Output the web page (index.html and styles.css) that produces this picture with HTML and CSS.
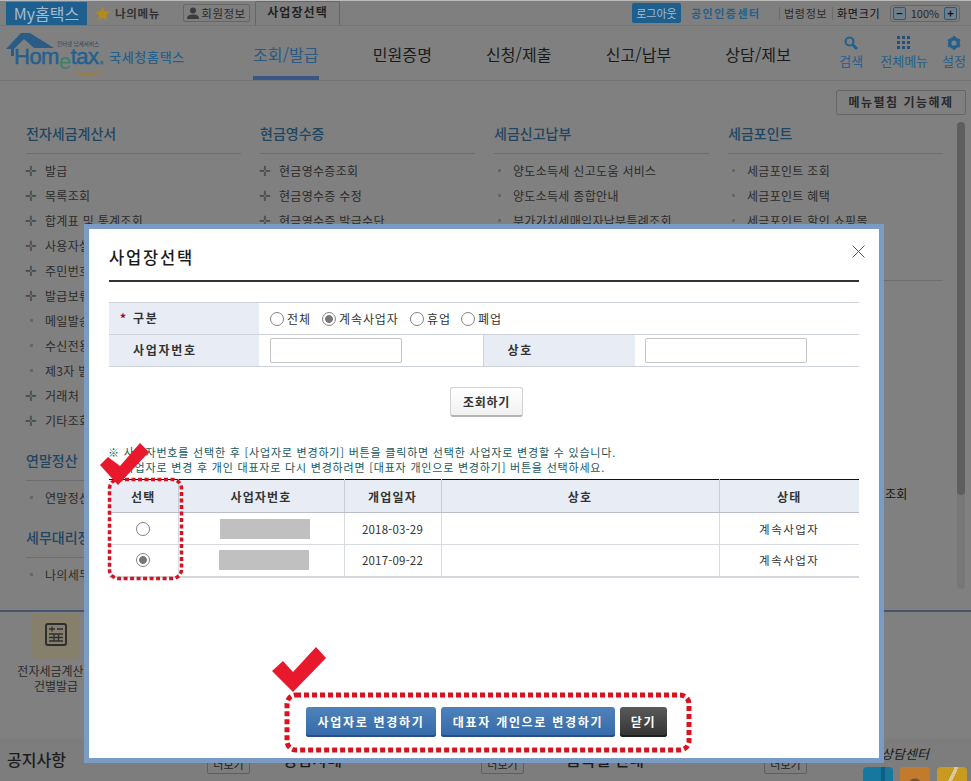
FILE: index.html
```html
<!DOCTYPE html>
<html lang="ko">
<head>
  <meta charset="UTF-8">
  <title>사업장선택</title>
  <link rel="stylesheet" href="styles.css">
</head>
<body>

  <!-- top bar -->
  <div class="topbar">
    <a class="my-home">My홈택스</a>
    <a class="my-menu">
      <svg width="15" height="15" viewBox="0 0 24 24"><path d="M12 1l3.400 7.300 7.900 1-5.800 5.400 1.500 7.900L12 18.700l-7 3.900 1.500-7.900L.7 9.300l7.900-1z" fill="#b58a1c"/></svg>
      나의메뉴
    </a>
    <a class="member">
      <svg width="12" height="12" viewBox="0 0 12 12"><circle cx="6" cy="3.500" r="3" fill="#3c3c3c"/><path d="M0 12c0-3.500 2.500-4.500 6-4.500s6 1 6 4.500z" fill="#3c3c3c"/></svg>
      회원정보
    </a>
    <a class="biz-tab">사업장선택</a>
    <div class="top-right">
      <a class="logout">로그아웃</a>
      <a class="cert">공인인증센터</a>
      <a class="law">법령정보</a>
      <span class="size-label">화면크기</span>
      <div class="zoomer"><b>−</b><span>100%</span><b>+</b></div>
    </div>
  </div>

  <!-- logo and nav -->
  <div class="header">
    <div class="logo">
      <svg class="roof" width="50" height="24" viewBox="0 0 50 24"><path d="M0 16L15 0h9l24 15H28L18 6 8 16v7H5v-7z" fill="#2a5c85"/></svg>
      <span class="logo-small">인터넷 납세서비스</span>
      <span class="logo-word">Hom<i>e</i>tax<em>.</em></span>
      <svg class="swoosh" width="32" height="6" viewBox="0 0 32 6"><path d="M0 0c8 7 22 7 32 0-10 4-22 4-32 0z" fill="#a27a3a"/></svg>
      <span class="logo-name">국세청홈택스</span>
    </div>
    <ul class="nav">
      <li class="on">조회/발급</li>
      <li>민원증명</li>
      <li>신청/제출</li>
      <li>신고/납부</li>
      <li>상담/제보</li>
    </ul>
    <div class="tools">
      <a class="tool tool-search">
        <svg width="14" height="14" viewBox="0 0 14 14"><circle cx="5.500" cy="5.500" r="4" fill="none" stroke="#24608e" stroke-width="2.200"/><path d="M8.500 8.500L13 13" stroke="#24608e" stroke-width="2.800"/></svg>
        검색
      </a>
      <a class="tool tool-all">
        <svg width="14" height="14" viewBox="0 0 14 14" fill="#24507a"><rect width="3" height="3"/><rect x="5" width="3" height="3"/><rect x="10" width="3" height="3"/><rect y="5" width="3" height="3"/><rect x="5" y="5" width="3" height="3"/><rect x="10" y="5" width="3" height="3"/><rect y="10" width="3" height="3"/><rect x="5" y="10" width="3" height="3"/><rect x="10" y="10" width="3" height="3"/></svg>
        전체메뉴
      </a>
      <a class="tool tool-set">
        <svg width="14" height="14" viewBox="0 0 14 14"><circle cx="7" cy="7" r="4.300" fill="none" stroke="#24608e" stroke-width="3.400"/><path d="M7 0v2M7 12v2M1 3.500l1.700 1M11.300 9.500l1.700 1M1 10.500l1.700-1M11.300 4.500l1.700-1" stroke="#24608e" stroke-width="2.200"/></svg>
        설정
      </a>
    </div>
  </div>

  <!-- menu -->
  <div class="main">
    <div class="main-tools"><a class="unfold-btn">메뉴펼침 기능해제</a></div>
    <div class="columns">
      <div class="col">
        <div class="sec">
          <h3>전자세금계산서</h3>
          <ul>
            <li class="plus">발급</li>
            <li class="plus">목록조회</li>
            <li class="plus">합계표 및 통계조회</li>
            <li class="plus">사용자설정</li>
            <li class="plus">주민번호수취분전환</li>
            <li class="plus">발급보류</li>
            <li>메일발송</li>
            <li>수신전용</li>
            <li>제3자 발급</li>
            <li class="plus">거래처</li>
            <li class="plus">기타조회</li>
          </ul>
        </div>
        <div class="sec">
          <h3>연말정산</h3>
          <ul><li>연말정산간소화</li></ul>
        </div>
        <div class="sec">
          <h3>세무대리정보</h3>
          <ul><li>나의세무대리</li></ul>
        </div>
      </div>
      <div class="col">
        <div class="sec">
          <h3>현금영수증</h3>
          <ul>
            <li class="plus">현금영수증조회</li>
            <li class="plus">현금영수증 수정</li>
            <li class="plus">현금영수증 발급수단</li>
          </ul>
        </div>
      </div>
      <div class="col">
        <div class="sec">
          <h3>세금신고납부</h3>
          <ul>
            <li>양도소득세 신고도움 서비스</li>
            <li>양도소득세 종합안내</li>
            <li>부가가치세매입자납부특례조회</li>
          </ul>
        </div>
      </div>
      <div class="col">
        <div class="sec">
          <h3>세금포인트</h3>
          <ul>
            <li>세금포인트 조회</li>
            <li>세금포인트 혜택</li>
            <li>세금포인트 할인 쇼핑몰</li>
          </ul>
        </div>
        <div class="sec">
          <h3>&nbsp;</h3>
          <ul><li class="far">조회</li></ul>
        </div>
      </div>
    </div>
    <div class="scroll"><div class="thumb"></div></div>
  </div>

  <!-- quick links -->
  <div class="quick">
    <div class="quick-item">
      <div class="quick-tile">
        <svg width="22" height="23" viewBox="0 0 22 23"><rect x="1" y="1" width="20" height="21" rx="2" fill="none" stroke="#2f2f2f" stroke-width="2"/><path d="M4 6h6M7 3.500v5M12 6h6M4 11h14M4 14.500h14M4 18h14M9 11v7M13.500 11v7" stroke="#2f2f2f" stroke-width="1.300" fill="none"/></svg>
      </div>
      <p>전자세금계산서<br>건별발급</p>
    </div>
  </div>

  <!-- bottom notices -->
  <div class="bottom">
    <div class="notice notice-a"><strong>공지사항</strong><a>더보기</a></div>
    <div class="notice notice-b"><strong>상담사례</strong><a>더보기</a></div>
    <div class="notice notice-c"><strong>품목별 안내</strong><a>더보기</a></div>
    <div class="counsel">
      <span>상담센터</span>
      <div class="tiles"><i class="t-blue"></i><i class="t-orange"></i><i class="t-yellow"></i></div>
    </div>
  </div>

  <!-- popup -->
  <div class="modal">
    <h2>사업장선택</h2>
    <svg class="close" width="13" height="13" viewBox="0 0 13 13"><path d="M.5.5l12 12M12.500.5l-12 12" stroke="#555" stroke-width="1" fill="none"/></svg>

    <table class="search-table">
      <colgroup>
        <col class="w-label">
        <col class="w-field">
        <col class="w-label2">
        <col>
      </colgroup>
      <tr>
        <th class="th-req"><span class="req">*</span>구분</th>
        <td colspan="3">
          <div class="radios">
            <label class="r1"><input type="radio" name="kind">전체</label>
            <label class="r2"><input type="radio" name="kind" checked>계속사업자</label>
            <label class="r3"><input type="radio" name="kind">휴업</label>
            <label class="r4"><input type="radio" name="kind">폐업</label>
          </div>
        </td>
      </tr>
      <tr>
        <th>사업자번호</th>
        <td class="td-field"><input class="field" type="text"></td>
        <th class="th-name">상호</th>
        <td class="td-field"><input class="field field-wide" type="text"></td>
      </tr>
    </table>

    <div class="search-row"><button class="btn-search">조회하기</button></div>

    <p class="note">※ 사업자번호를 선택한 후 [사업자로 변경하기] 버튼을 클릭하면 선택한 사업자로 변경할 수 있습니다.<br>※ 사업자로 변경 후 개인 대표자로 다시 변경하려면 [대표자 개인으로 변경하기] 버튼을 선택하세요.</p>

    <table class="list-table">
      <tr>
        <th class="c1">선택</th>
        <th class="c2">사업자번호</th>
        <th class="c3">개업일자</th>
        <th class="c4">상호</th>
        <th>상태</th>
      </tr>
      <tr>
        <td><input type="radio" name="biz"></td>
        <td><div class="mask"></div></td>
        <td>2018-03-29</td>
        <td></td>
        <td class="state">계속사업자</td>
      </tr>
      <tr>
        <td><input type="radio" name="biz" checked></td>
        <td><div class="mask mask-b"></div></td>
        <td>2017-09-22</td>
        <td></td>
        <td class="state">계속사업자</td>
      </tr>
    </table>

    <div class="actions">
      <button class="btn-blue">사업자로 변경하기</button>
      <button class="btn-blue btn-long">대표자 개인으로 변경하기</button>
      <button class="btn-dark">닫기</button>
    </div>
  </div>

  <!-- red marks drawn over the capture -->
  <svg class="marks" width="971" height="781" viewBox="0 0 971 781">
    <rect x="109.500" y="479.500" width="72" height="99" rx="9" class="ring ring-small"/>
    <rect x="287" y="695" width="402" height="55" rx="9" class="ring"/>
    <path d="M100 465l8-8 12 9 20-23 9 9-31 33z" fill="#e8192c"/>
    <path d="M272 671l11-10 10 11 23-25 10 11-33 34z" fill="#e8192c"/>
  </svg>

</body>
</html>
```

FILE: styles.css
```css
* { box-sizing: border-box; }
html, body { margin: 0; height: 781px; overflow: hidden; }
body {
  font-family: "Noto Sans CJK KR", "Liberation Sans", sans-serif;
  font-size: 12px;
  color: #222;
  background: #808080;
  position: relative;
}
ul { list-style: none; margin: 0; padding: 0; }
a { color: inherit; text-decoration: none; }
h2, h3, p { margin: 0; }

/* top bar */
.topbar {
  height: 26px;
  display: flex;
  align-items: center;
  background: #7f7f7f;
  border-top: 1px solid #bbb;
  border-bottom: 1px solid #747474;
  padding-left: 6px;
}
.my-home {
  width: 81px;
  height: 23px;
  background: #1f5f8e;
  color: #a4bccd;
  font-size: 16px;
  line-height: 23px;
  text-align: center;
}
.my-menu {
  display: flex;
  align-items: center;
  gap: 5px;
  margin-left: 8px;
  width: 88px;
  font-weight: 700;
  font-size: 11.500px;
  letter-spacing: .7px;
  color: #333;
}
.member {
  display: flex;
  align-items: center;
  justify-content: center;
  gap: 2px;
  width: 67px;
  height: 18px;
  border: 1px solid #666;
  border-radius: 2px;
  font-size: 11.500px;
  letter-spacing: .5px;
  color: #2a2a2a;
}
.biz-tab {
  width: 85px;
  height: 24px;
  margin-left: 5px;
  border: 1px solid #666;
  border-bottom: 0;
  border-radius: 2px 2px 0 0;
  font-weight: 700;
  font-size: 12px;
  letter-spacing: 1.100px;
  line-height: 20px;
  text-align: center;
  color: #222;
}
.top-right {
  margin-left: auto;
  display: flex;
  align-items: center;
  padding-right: 11px;
}
.logout {
  width: 49px;
  height: 20px;
  background: #1f5f8e;
  border-radius: 2px;
  color: #a4bccd;
  font-size: 11px;
  line-height: 20px;
  text-align: center;
}
.cert {
  margin-left: 10px;
  width: 87px;
  font-weight: 700;
  font-size: 11px;
  letter-spacing: 1.500px;
  color: #255f8d;
}
.law {
  width: 53px;
  padding-left: 4px;
  margin-left: 1px;
  border-left: 1px solid #6c6c6c;
  font-size: 11px;
  line-height: 13px;
  letter-spacing: .7px;
  color: #2a2a2a;
}
.size-label {
  width: 58px;
  padding-left: 4px;
  border-left: 1px solid #6c6c6c;
  font-size: 11px;
  line-height: 13px;
  letter-spacing: .7px;
  color: #111;
}
.zoomer {
  width: 70px;
  height: 17px;
  border: 1px solid #666;
  border-radius: 3px;
  display: flex;
  align-items: center;
  justify-content: space-between;
  padding: 0 2px;
  font-size: 11px;
  color: #2a2a2a;
}
.zoomer b {
  width: 13px;
  height: 13px;
  border: 1px solid #33566f;
  background: #6d7f8c;
  border-radius: 2px;
  font-size: 11px;
  line-height: 10px;
  text-align: center;
  color: #111;
}

/* header */
.header {
  height: 55px;
  display: flex;
  border-bottom: 1px solid #747474;
  position: relative;
}
.logo { width: 253px; position: relative; }
.roof { position: absolute; left: 6px; top: 7px; }
.logo-small {
  position: absolute;
  left: 57px;
  top: 15px;
  font-size: 5.500px;
  line-height: 7px;
  color: #2c4256;
  white-space: nowrap;
}
.logo-word {
  position: absolute;
  left: 14px;
  top: 23px;
  font-family: "Liberation Sans", sans-serif;
  font-size: 22px;
  line-height: 16px;
  letter-spacing: -.5px;
  color: #24608e;
  -webkit-text-stroke: .5px #24608e;
  white-space: nowrap;
}
.logo-word i { font-style: normal; position: relative; top: 5px; color: #3f7f6a; -webkit-text-stroke: 0; }
.logo-word em { font-style: normal; color: #3f7f6a; }
.swoosh { position: absolute; left: 72px; top: 44px; }
.logo-name {
  position: absolute;
  left: 109px;
  top: 22px;
  font-size: 13px;
  font-weight: 500;
  letter-spacing: .7px;
  line-height: 18px;
  color: #24608e;
  white-space: nowrap;
}
.nav { display: flex; gap: 54px; }
.nav li {
  height: 54px;
  padding-top: 16px;
  font-size: 16px;
  letter-spacing: .1px;
  line-height: 24px;
  color: #1a1a1a;
  white-space: nowrap;
}
.nav li.on { color: #2a5a80; border-bottom: 4px solid #3a5784; }
.tools { margin-left: auto; display: flex; padding-right: 5px; }
.tool {
  display: flex;
  flex-direction: column;
  align-items: center;
  padding-top: 10px;
  font-size: 13px;
  line-height: 18px;
  color: #255f8d;
  white-space: nowrap;
}
.tool svg { margin-bottom: 2px; }
.tool-all { margin-left: 17px; }
.tool-set { margin-left: 14px; }

/* menu area */
.main { height: 529px; position: relative; }
.main-tools {
  display: flex;
  justify-content: flex-end;
  padding: 9px 5px 0 0;
}
.unfold-btn {
  width: 130px;
  height: 25px;
  border: 1px solid #666;
  border-radius: 2px;
  font-weight: 700;
  font-size: 12px;
  letter-spacing: 1.500px;
  line-height: 22px;
  text-align: center;
  color: #2a2a2a;
}
.columns {
  display: flex;
  gap: 19px;
  padding: 9px 0 0 26px;
}
.col { width: 215px; }
.sec + .sec { margin-top: 18px; }
.sec h3 {
  height: 30px;
  border-bottom: 1px solid #6e6e6e;
  font-size: 14px;
  font-weight: 500;
  line-height: 18px;
  color: #1f4560;
  white-space: nowrap;
  overflow: hidden;
}
.sec ul { margin-top: 4px; }
.sec li {
  height: 25px;
  padding-left: 19px;
  font-size: 12px;
  letter-spacing: .3px;
  line-height: 25px;
  color: #2b2b2b;
  white-space: nowrap;
  position: relative;
}
.sec li::before {
  content: "";
  position: absolute;
  left: 4px;
  top: 11px;
  width: 3px;
  height: 3px;
  background: #666;
}
.sec li.plus::before {
  content: "✛";
  left: -1px;
  top: 0;
  width: auto;
  height: auto;
  background: none;
  font-size: 14px;
  color: #4a4a4a;
}
.sec li.far { margin-top: 200px; padding-left: 157px; color: #111; }
.sec li.far::before { display: none; }
.scroll {
  position: absolute;
  left: 957px;
  top: 41px;
  width: 8px;
  height: 467px;
  border-radius: 4px;
  background: #777;
}
.thumb { height: 373px; border-radius: 4px; background: #5e5e5e; }

/* quick links */
.quick {
  height: 128px;
  border-top: 2px solid #46566c;
  padding-left: 13px;
}
.quick-item { width: 86px; text-align: center; }
.quick-tile {
  width: 48px;
  height: 46px;
  margin: 1px auto 0;
  padding-top: 10px;
  background: #857f6c;
  border-radius: 6px;
}
.quick-item p {
  margin-top: 4px;
  font-size: 12px;
  line-height: 15px;
  color: #2b2b2b;
  white-space: nowrap;
}

/* bottom */
.bottom {
  height: 44px;
  background: #7d7d7d;
  display: flex;
  padding: 9px 0 0 7px;
}
.notice { display: flex; height: 26px; align-items: flex-start; }
.notice strong {
  font-size: 16px;
  font-weight: 500;
  line-height: 24px;
  color: #1c1c1c;
}
.notice a {
  width: 43px;
  height: 18px;
  margin-top: 9px;
  border: 1px solid #5f5f5f;
  border-radius: 2px;
  font-size: 11px;
  line-height: 15px;
  text-align: center;
  color: #222;
}
.notice-a { width: 276px; justify-content: space-between; padding-right: 33px; }
.notice-b { width: 283px; justify-content: space-between; padding-right: 42px; }
.notice-c { width: 241px; justify-content: space-between; }
.counsel { margin-left: 56px; width: 104px; position: relative; top: -1px; }
.counsel span {
  display: block;
  margin-left: 18px;
  font-size: 13px;
  line-height: 16px;
  font-style: italic;
  color: #1a1a1a;
}
.tiles { display: flex; gap: 7px; margin-top: 5px; }
.tiles i { display: block; width: 30px; height: 20px; border-radius: 4px 4px 0 0; }
.t-blue { background: linear-gradient(90deg, #16779f 60%, #0f5f82 60%, #0f5f82 75%, #16779f 75%); }
.t-orange { background: radial-gradient(circle at 50% 90%, #6f5230 0, #6f5230 6px, #c27a2c 7px); }
.t-yellow { background: linear-gradient(115deg, #c89a1e 45%, #d8c89a 45%, #d8c89a 55%, #c89a1e 55%); }

/* popup */
.modal {
  position: absolute;
  left: 84px;
  top: 224px;
  width: 800px;
  height: 539px;
  background: #fff;
  border: 5px solid #7a9bc4;
  padding: 0 20px;
}
.modal h2 {
  height: 53px;
  padding-top: 15px;
  border-bottom: 2px solid #333;
  font-size: 16.500px;
  font-weight: 500;
  letter-spacing: 1.800px;
  line-height: 26px;
  color: #1b1b1b;
}
.close { position: absolute; left: 763px; top: 16px; }

.search-table, .list-table {
  width: 750px;
  border-collapse: collapse;
  table-layout: fixed;
}
.search-table { margin-top: 20px; border-top: 1px solid #cdd2da; }
.search-table tr { height: 32px; border-bottom: 1px solid #cdd2da; }
.search-table th {
  background: #e8ecf4;
  padding: 0 0 2px 24px;
  font-size: 12px;
  letter-spacing: 1.700px;
  text-align: left;
  color: #333;
}
.search-table td { padding: 0; }
.w-label { width: 150px; }
.w-field { width: 224px; }
.w-label2 { width: 152px; }
.search-table th.th-req { padding-left: 11px; }
.search-table th.th-name { border-left: 1px solid #cdd2da; }
.search-table td.td-field { padding-left: 11px; }
.req {
  display: inline-block;
  width: 13px;
  color: #a00020;
  font-weight: 700;
}
.radios { display: flex; padding-left: 11px; font-size: 12px; letter-spacing: .9px; color: #333; }
.radios label { display: flex; align-items: center; gap: 3px; }
.r1 { width: 52px; }
.r2 { width: 88px; }
.r3 { width: 51px; }

input[type="radio"] {
  appearance: none;
  -webkit-appearance: none;
  width: 14px;
  height: 14px;
  margin: 0;
  border: 1px solid #858585;
  border-radius: 50%;
  background: #fff;
  flex: none;
}
input[type="radio"]:checked {
  background: radial-gradient(circle, #777 0, #777 3.500px, #fff 4.200px);
}
.field {
  display: block;
  width: 132px;
  height: 25px;
  border: 1px solid #c4c4c4;
  border-radius: 2px;
  background: #fff;
}
.field-wide { width: 162px; margin-left: -1px; }

.search-row { display: flex; justify-content: center; padding: 20px 0 0 5px; }
.btn-search {
  width: 73px;
  height: 30px;
  padding: 0;
  border: 1px solid #d2d2d2;
  border-bottom: 2px solid #b4b4b4;
  border-radius: 3px;
  background: linear-gradient(#fff, #f1f1f1);
  font: 700 12px "Noto Sans CJK KR", sans-serif;
  letter-spacing: .7px;
  color: #333;
}
.note {
  margin: 28px 0 0 -1px;
  font-size: 11px;
  letter-spacing: .8px;
  line-height: 15px;
  color: #17595f;
  white-space: nowrap;
}
.list-table { margin-top: 4px; border-top: 1px solid #111; border-bottom: 2px solid #d4d7dd; }
.list-table th {
  height: 33px;
  background: #e8ecf4;
  border-bottom: 1px solid #b9bec8;
  border-left: 1px solid #c6ccd8;
  font-size: 12px;
  letter-spacing: 1.200px;
  color: #333;
}
.list-table td {
  height: 32px;
  padding: 0;
  border-left: 1px solid #d8dbe2;
  border-bottom: 1px solid #d8dbe2;
  font-size: 11.500px;
  letter-spacing: .2px;
  text-align: center;
  color: #333;
}
.list-table td.state { letter-spacing: 1.500px; }
.list-table th:first-child, .list-table td:first-child { border-left: 0; }
.list-table input { display: block; margin: 0 auto; }
.c1 { width: 69px; }
.c2 { width: 166px; }
.c3 { width: 97px; }
.c4 { width: 278px; }
.mask { width: 90px; height: 20px; margin-left: 41px; background: #c0c0c0; }
.mask-b { margin-left: 40px; }

.actions {
  display: flex;
  justify-content: center;
  gap: 5px;
  margin-top: 129px;
  padding-left: 5px;
}
.actions button {
  height: 30px;
  padding: 0;
  border: 0;
  border-radius: 3px;
  font: 700 12px "Noto Sans CJK KR", sans-serif;
  letter-spacing: 1.700px;
  color: #fff;
}
.btn-blue {
  width: 130px;
  background: linear-gradient(#4f82bb, #336aa8);
  box-shadow: inset 0 -2px 0 #274f80;
}
.btn-blue.btn-long { width: 174px; }
.btn-dark {
  width: 47px;
  background: linear-gradient(#5a5a5a, #333);
  box-shadow: inset 0 -2px 0 #1e1e1e;
}

/* red marks */
.marks { position: absolute; left: 0; top: 0; pointer-events: none; }
.ring {
  fill: none;
  stroke: #d8121f;
  stroke-width: 5;
  stroke-dasharray: 5 3;
}
.ring-small { stroke-width: 3.500; stroke-dasharray: 4 2.500; }
```
